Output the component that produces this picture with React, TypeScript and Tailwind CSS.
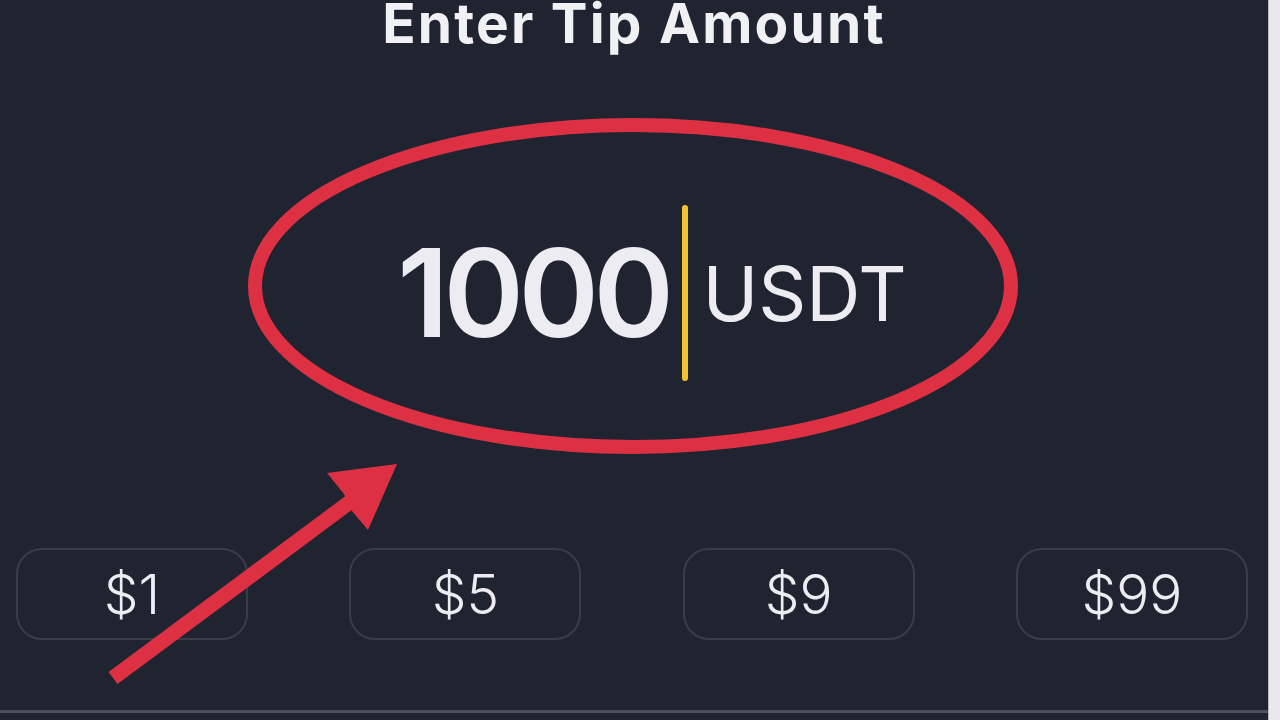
const presets = ["$1", "$5", "$9", "$99"];

export default function App() {
  return (
    <div
      className="flex h-[720px] w-[1280px] overflow-hidden bg-[#e9e9eb]"
      style={{ fontFamily: "Inter, 'Noto Sans', sans-serif" }}
    >
      <div className="relative flex h-full w-[1268px] flex-col bg-[#1f2430]">
        <h1 className="mt-[-4px] text-center text-[55px] font-bold leading-[55px] tracking-[2.2px] text-[#f1f1f4]">
          Enter Tip Amount
        </h1>

        <div className="mt-[154px] flex items-center justify-center pl-[36px]">
          <span className="text-[122px] font-semibold leading-none tracking-[-5.5px] text-[#ececf1]">
            1000
          </span>
          <span className="mx-[14px] h-[176px] w-[6px] rounded-full bg-[#f2c230]" />
          <span className="text-[75px] font-normal leading-none text-[#ececf1]">USDT</span>
        </div>

        <div className="mt-[167px] flex justify-between pl-[16px] pr-[20px]">
          {presets.map((p) => (
            <button
              key={p}
              className="flex h-[92px] w-[232px] items-center justify-center rounded-[26px] border-2 border-[#383d49] text-[55px] font-light leading-none text-[#ececf1]"
            >
              {p}
            </button>
          ))}
        </div>

        <div className="mt-auto mb-[7px] h-[3px] w-full bg-[#4a4f5b]" />

        <svg
          className="pointer-events-none absolute left-0 top-0"
          width="1268"
          height="720"
          viewBox="0 0 1268 720"
        >
          <ellipse cx="633" cy="286" rx="378" ry="161" fill="none" stroke="#dd3143" strokeWidth="14" />
          <line x1="113" y1="678" x2="350" y2="502" stroke="#dd3143" strokeWidth="15" />
          <polygon points="397,464 327,473 344,494 352,511 368,530" fill="#dd3143" />
        </svg>
      </div>
      <div className="h-full w-[1px] bg-[#b9b9be]" />
    </div>
  );
}
